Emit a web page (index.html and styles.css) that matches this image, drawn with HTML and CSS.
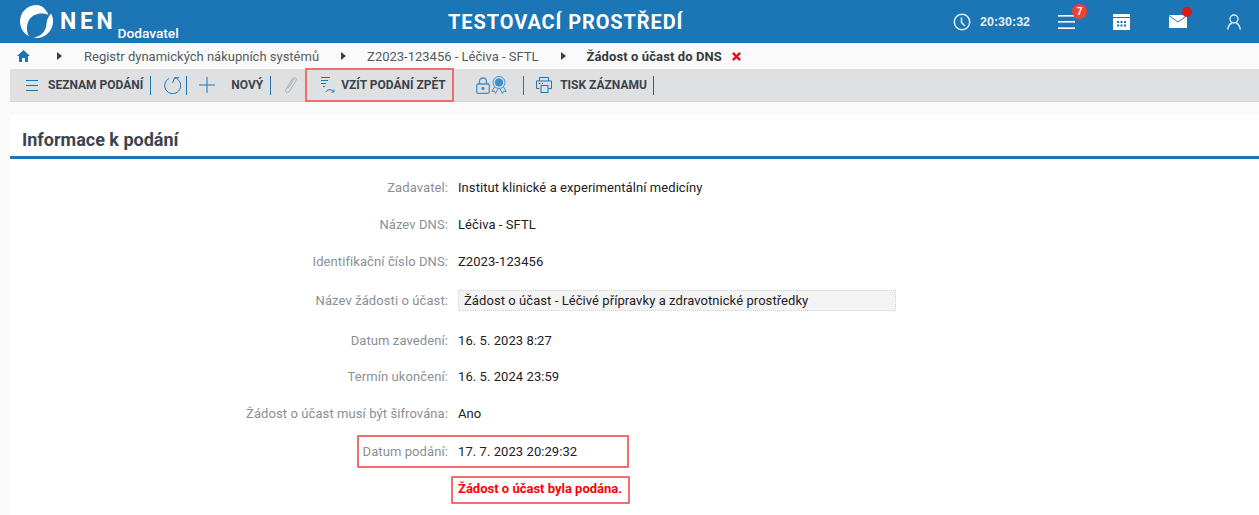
FILE: index.html
```html
<!DOCTYPE html>
<html lang="cs">
<head>
    <meta charset="UTF-8">
    <title>NEN Dodavatel</title>
    <link rel="stylesheet" href="styles.css">
</head>
<body>
    <header class="topbar">
        <div class="logo">
            <svg class="logo-mark" width="33" height="33" viewBox="0 0 33 33" fill="#fff">
                <path d="M16.500 0A16.500 16.500 0 0 0 9 31.200C6.500 27 6 21 9 15 13 8.500 22 7 28.500 10 26 4 22 0 16.500 0z"/>
                <path d="M31 8.500A16.500 16.500 0 0 1 13 32.600C20 32 26 27 26.500 19 26.700 15 28.500 11 31 8.500z"/>
            </svg>
            <span class="logo-name">NEN</span>
            <span class="logo-role">Dodavatel</span>
        </div>
        <div class="env-title">TESTOVACÍ PROSTŘEDÍ</div>
        <div class="top-tools">
            <svg class="clock" width="18" height="18" viewBox="0 0 18 18" fill="none" stroke="#e6eef5" stroke-width="1.5">
                <circle cx="9" cy="9" r="7.7"/>
                <path d="M8.500 4.500V9.500L12 13"/>
            </svg>
            <span class="time">20:30:32</span>
            <div class="tool tool-menu">
                <svg width="17" height="16" viewBox="0 0 17 16" fill="#fff">
                    <rect y="1" width="17" height="1.600"/>
                    <rect y="7" width="17" height="1.600"/>
                    <rect y="13.400" width="17" height="1.600"/>
                </svg>
                <span class="badge">7</span>
            </div>
            <div class="tool tool-cal">
                <svg width="17" height="16" viewBox="0 0 17 16">
                    <rect width="17" height="16" fill="#fff"/>
                    <rect y="3" width="17" height="1" fill="#1c75b4"/>
                    <g fill="#1c75b4">
                        <rect x="4" y="7" width="2" height="2"/><rect x="7.500" y="7" width="2" height="2"/><rect x="11" y="7" width="2" height="2"/>
                        <rect x="4" y="10.500" width="2" height="2"/><rect x="7.500" y="10.500" width="2" height="2"/><rect x="11" y="10.500" width="2" height="2"/>
                    </g>
                </svg>
            </div>
            <div class="tool tool-mail">
                <svg width="18" height="13" viewBox="0 0 18 13">
                    <rect width="18" height="13" fill="#fff"/>
                    <path d="M0 .5L9 7l9-6.500" fill="none" stroke="#1c75b4" stroke-width="1"/>
                </svg>
                <span class="dot"></span>
            </div>
            <div class="tool tool-user">
                <svg width="14" height="16" viewBox="0 0 14 16" fill="none" stroke="#e6eef5" stroke-width="1.400">
                    <circle cx="7" cy="5" r="4"/>
                    <path d="M.8 15.500c0-3.500 2.500-6 4-6.500M13.200 15.500c0-3.500-2.500-6-4-6.500"/>
                </svg>
            </div>
        </div>
    </header>

    <nav class="crumbs">
        <svg class="home" width="13" height="12" viewBox="0 0 13 12" fill="#1c75b4">
            <path d="M6.500 0L13 6h-2v6H8V8H5v4H2V6H0z"/>
        </svg>
        <span class="arrow first"></span>
        <a class="crumb">Registr dynamických nákupních systémů</a>
        <span class="arrow"></span>
        <a class="crumb">Z2023-123456 - Léčiva - SFTL</a>
        <span class="arrow"></span>
        <strong class="crumb-current">Žádost o účast do DNS</strong>
        <svg class="close" width="9" height="9" viewBox="0 0 10 10" stroke="#e8101c" stroke-width="2.800">
            <path d="M1 1l8 8M9 1l-8 8"/>
        </svg>
    </nav>

    <div class="toolbar">
        <button class="tb-btn btn-list">
            <svg width="12" height="11" viewBox="0 0 12 11" stroke="#1c75b4" stroke-width="1">
                <path d="M0 .5h12M0 5.500h12M0 10.500h12"/>
            </svg>
            SEZNAM PODÁNÍ
        </button>
        <span class="sep"></span>
        <button class="tb-btn btn-reload">
            <svg width="18" height="18" viewBox="0 0 18 18" fill="none" stroke="#1c75b4" stroke-width="1">
                <path d="M6 2.500A8 8 0 1 0 11.500 1.800M11.500 1.800L9.500 7M11.500 1.800L16 1.800"/>
            </svg>
        </button>
        <span class="sep"></span>
        <button class="tb-btn btn-new">
            <svg width="16" height="16" viewBox="0 0 16 16" stroke="#1c75b4" stroke-width="1">
                <path d="M0 8h16M8 0v16"/>
            </svg>
            <span class="btn-new-label">NOVÝ</span>
        </button>
        <span class="sep"></span>
        <button class="tb-btn btn-clip">
            <svg width="12" height="16" viewBox="0 0 12 16" fill="none" stroke="#a9abae" stroke-width="1">
                <path d="M1.500 15.300c-1.200-.5-1.200-1.800-.7-2.800L7.500 1.800c.7-1.200 2-1.600 3-1 1 .7 1 1.800.4 3L4.500 14.300c-.7 1.100-2 1.500-3 1zM3 11.500L9 2"/>
            </svg>
        </button>
        <button class="tb-btn btn-back">
            <svg width="14" height="16" viewBox="0 0 14 16" fill="none" stroke="#1c75b4" stroke-width="1">
                <path d="M0 .5h9M0 3.500h7M0 6.500h5M2 9.500h2M5 15c1-2.500 5-3 7-1M13 12.500v2.500h-2.500"/>
            </svg>
            VZÍT PODÁNÍ ZPĚT
        </button>
        <span class="sep sep-dark"></span>
        <button class="tb-btn btn-seal">
            <svg width="14" height="17" viewBox="0 0 14 17" fill="none" stroke="#3f8fcb" stroke-width="1.300">
                <rect x=".7" y="7" width="12.600" height="9.300" rx="1.500"/>
                <path d="M3.500 7V4.500a3.500 3.500 0 0 1 7 0V7"/>
                <circle cx="7" cy="11.500" r="1" fill="#3f8fcb"/>
            </svg>
            <svg width="16" height="18" viewBox="0 0 16 18" fill="none" stroke="#3f8fcb" stroke-width="1">
                <circle cx="8" cy="6.500" r="6"/>
                <circle cx="8" cy="6.500" r="3.700" fill="#3f8fcb"/>
                <path d="M3.500 11L.8 15.500l2.700-.3 1 2.300L7 13M12.500 11l2.700 4.500-2.700-.3-1 2.300L9 13"/>
            </svg>
        </button>
        <span class="sep"></span>
        <button class="tb-btn btn-print">
            <svg width="16" height="16" viewBox="0 0 16 16" fill="none" stroke="#1c75b4" stroke-width="1">
                <path d="M3.500 4V.5h9V4M3.500 11.500H.5V4h15v7.500h-3"/>
                <rect x="5" y="8.500" width="7" height="7"/>
                <path d="M2.500 6.500h2M6 6.500h1"/>
            </svg>
            TISK ZÁZNAMU
        </button>
        <span class="sep sep-end"></span>
    </div>

    <main class="card">
        <h2 class="card-title">Informace k podání</h2>
        <div class="details">
            <div class="row"><span class="label">Zadavatel:</span><span class="value">Institut klinické a experimentální medicíny</span></div>
            <div class="row"><span class="label">Název DNS:</span><span class="value">Léčiva - SFTL</span></div>
            <div class="row"><span class="label">Identifikační číslo DNS:</span><span class="value">Z2023-123456</span></div>
            <div class="row row-input"><span class="label">Název žádosti o účast:</span><span class="value field">Žádost o účast - Léčivé přípravky a zdravotnické prostředky</span></div>
            <div class="row"><span class="label">Datum zavedení:</span><span class="value">16. 5. 2023 8:27</span></div>
            <div class="row"><span class="label">Termín ukončení:</span><span class="value">16. 5. 2024 23:59</span></div>
            <div class="row"><span class="label">Žádost o účast musí být šifrována:</span><span class="value">Ano</span></div>
            <div class="row row-marked">
                <span class="label">Datum podání:</span><span class="value">17. 7. 2023 20:29:32</span>
                <span class="mark mark-date"></span>
            </div>
            <div class="row row-notice"><span class="label"></span><span class="notice">Žádost o účast byla podána.</span></div>
        </div>
    </main>
</body>
</html>
```

FILE: styles.css
```css
* {
    box-sizing: border-box;
}
html, body {
    height: 100%;
}
body {
    margin: 0;
    background-color: #fafafa;
    font-family: Roboto, "Liberation Sans", sans-serif;
    font-size: 13px;
    color: #212529;
    overflow: hidden;
}

/* top blue bar */
.topbar {
    display: grid;
    grid-template-columns: 448px auto 1fr;
    align-items: center;
    height: 43px;
    background-color: #1c75b4;
    color: #fff;
}
.logo {
    display: flex;
    align-items: flex-start;
    height: 43px;
    padding-left: 20px;
}
.logo-mark {
    margin-top: 5px;
    flex: none;
}
.logo-name {
    margin: 8px 0 0 7px;
    font-size: 23px;
    line-height: 27px;
    font-weight: 700;
    letter-spacing: 3.7px;
}
.logo-role {
    margin: 24px 0 0 1px;
    font-size: 13.700px;
    line-height: 18px;
    font-weight: 500;
}
.env-title {
    font-size: 20px;
    font-weight: 700;
    letter-spacing: 0.9px;
    text-align: center;
}
.top-tools {
    display: flex;
    align-items: center;
    justify-content: flex-end;
    height: 43px;
}
.clock {
    margin-right: 9px;
    margin-left: -1px;
}
.time {
    width: 50px;
    font-family: "Liberation Sans", sans-serif;
    font-size: 12.500px;
    font-weight: 700;
    color: #e6eef5;
}
.tool {
    position: relative;
    display: flex;
    align-items: center;
    height: 16px;
}
.tool-menu {
    margin-left: 28px;
}
.tool-cal {
    margin-left: 38px;
}
.tool-mail {
    margin-left: 39px;
}
.tool-user {
    margin: 0 18px 0 40px;
}
.badge {
    position: absolute;
    top: -10px;
    left: 14px;
    width: 15px;
    height: 15px;
    border-radius: 50%;
    background-color: #ef4136;
    font-size: 10px;
    font-weight: 700;
    line-height: 15px;
    text-align: center;
}
.dot {
    position: absolute;
    top: -7px;
    left: 13px;
    width: 10px;
    height: 10px;
    border-radius: 50%;
    background-color: #dc1a1a;
}

/* breadcrumb */
.crumbs {
    display: flex;
    align-items: center;
    height: 26px;
    padding-left: 17px;
    color: #555b61;
}
.arrow {
    width: 0;
    height: 0;
    margin: 0 21px 0 22px;
    border-left: 5px solid #3a3f44;
    border-top: 4px solid transparent;
    border-bottom: 4px solid transparent;
}
.arrow.first {
    margin-left: 27px;
    margin-right: 22px;
}
.crumb-current {
    font-weight: 700;
    letter-spacing: 0.1px;
    color: #343a40;
}
.close {
    margin-left: 10px;
}

/* toolbar */
.toolbar {
    display: flex;
    align-items: center;
    height: 33px;
    margin-left: 10px;
    background-color: #dfe0e2;
    border-bottom: 1px solid #d4d5d7;
}
.tb-btn {
    display: flex;
    align-items: center;
    height: 32px;
    padding: 0;
    border: 0;
    background: none;
    font-family: inherit;
    font-size: 12px;
    font-weight: 700;
    color: #3c434a;
    white-space: nowrap;
}
.sep {
    flex: none;
    width: 1px;
    height: 19px;
    background-color: #1c75b4;
}
.sep-dark {
    background-color: #5a6168;
}
.sep-end {
    margin-left: -1px;
    background-color: #3c5a72;
}
.btn-list {
    padding: 0 7px 0 16px;
}
.btn-list svg {
    margin-right: 10px;
}
.btn-reload {
    padding: 0 5px 0 12px;
}
.btn-new {
    padding: 0 7px 0 12px;
}
.btn-new-label {
    margin-left: 16px;
}
.btn-clip {
    padding: 0 9px 0 14px;
}
.btn-back {
    position: relative;
    width: 147px;
    padding: 0 0 0 15px;
    outline: 2px solid #f26d70;
    outline-offset: -1px;
}
.btn-back svg {
    margin-right: 6px;
}
.btn-seal {
    gap: 1px;
    padding: 0 16px 0 22px;
}
.btn-print {
    padding: 0 7px 0 12px;
}
.btn-print svg {
    margin-right: 8px;
}

/* info card */
.card {
    height: 400px;
    margin: 13px 0 0 10px;
    background-color: #fff;
}
.card-title {
    margin: 0;
    height: 44px;
    padding: 14px 12px 0;
    border-bottom: 3px solid #1c75b4;
    font-size: 18px;
    line-height: 22px;
    font-weight: 700;
    color: #3a4550;
}
.details {
    padding-top: 10px;
}
.row {
    position: relative;
    display: flex;
    align-items: center;
    height: 37px;
}
.label {
    flex: none;
    width: 448px;
    padding-right: 10px;
    text-align: right;
    color: #8a8f94;
    letter-spacing: 0.09px;
}
.value {
    color: #1d2125;
    letter-spacing: 0.07px;
}
.row-input {
    height: 41px;
}
.row-input + .row {
    padding-top: 1px;
}
.field {
    width: 438px;
    height: 21px;
    padding-left: 5px;
    line-height: 19px;
    background-color: #f3f3f3;
    border: 1px dotted #d4d4d4;
}
.row-marked {
    margin-top: 1px;
}
.mark {
    position: absolute;
    pointer-events: none;
}
.mark-date {
    top: 2px;
    left: 347px;
    width: 272px;
    height: 33px;
    border: 2px solid #f26d70;
    border-radius: 1px;
}
.row-notice {
    align-items: flex-start;
    height: 35px;
    padding-top: 6px;
}
.notice {
    margin-left: -7px;
    padding: 3px 6px 5px 5px;
    border: 2px solid #f26d70;
    border-radius: 1px;
    font-size: 13px;
    line-height: 16px;
    font-weight: 700;
    color: #f00;
}
```
